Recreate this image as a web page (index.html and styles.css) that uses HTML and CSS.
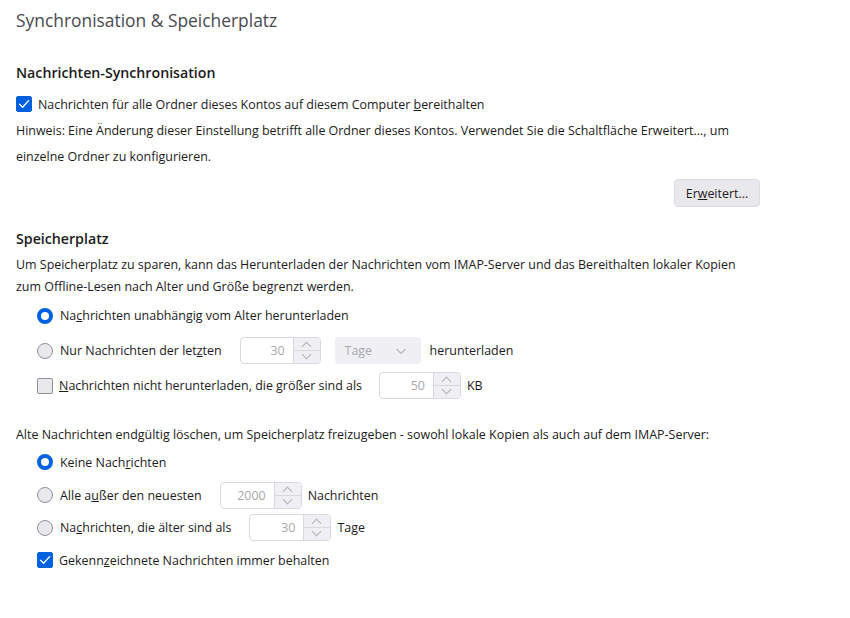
FILE: index.html
```html
<!DOCTYPE html>
<html lang="de">
<head>
<meta charset="utf-8">
<title>Synchronisation &amp; Speicherplatz</title>
<link rel="stylesheet" href="styles.css">
</head>
<body>
<div class="page">
  <h1 class="title">Synchronisation &amp; Speicherplatz</h1>

  <h2 class="heading first">Nachrichten-Synchronisation</h2>
  <div class="row check-row">
    <span class="checkbox checked"><svg viewBox="0 0 16 16" width="16" height="16"><path d="M3.6 8.3 L6.6 11.3 L12.6 4.6" fill="none" stroke="#fff" stroke-width="1.3" stroke-linecap="round" stroke-linejoin="round"/></svg></span>
    <span class="label">Nachrichten für alle Ordner dieses Kontos auf diesem Computer <u>b</u>ereithalten</span>
  </div>
  <p class="hint">Hinweis: Eine Änderung dieser Einstellung betrifft alle Ordner dieses Kontos. Verwendet Sie die Schaltfläche Erweitert..., um einzelne Ordner zu konfigurieren.</p>
  <div class="button-row">
    <button class="btn" type="button">Er<u>w</u>eitert...</button>
  </div>

  <h2 class="heading second">Speicherplatz</h2>
  <p class="desc">Um Speicherplatz zu sparen, kann das Herunterladen der Nachrichten vom IMAP-Server und das Bereithalten lokaler Kopien zum Offline-Lesen nach Alter und Größe begrenzt werden.</p>
  <div class="options">
    <div class="row opt tall">
      <span class="radio selected"></span>
      <span class="label">Na<u>c</u>hrichten unabhängig vom Alter herunterladen</span>
    </div>
    <div class="row opt tall">
      <span class="radio"></span>
      <span class="label">Nur Nachrichten der let<u>z</u>ten</span>
      <span class="number w80"><span class="value">30</span><span class="spin"><span class="up"></span><span class="down"></span></span></span>
      <span class="select"><span class="sel-text">Tage</span><svg class="chev" viewBox="0 0 12 12" width="12" height="12"><path d="M1.5 4 L6 8.5 L10.5 4" fill="none" stroke="#b5b5bb" stroke-width="1.1"/></svg></span>
      <span class="label after">herunterladen</span>
    </div>
    <div class="row opt tall">
      <span class="checkbox"></span>
      <span class="label"><u>N</u>achrichten nicht herunterladen, die größer sind als</span>
      <span class="number w82 gap16"><span class="value">50</span><span class="spin"><span class="up"></span><span class="down"></span></span></span>
      <span class="label after6">KB</span>
    </div>
  </div>

  <p class="delete-intro">Alte Nachrichten endgültig löschen, um Speicherplatz freizugeben - sowohl lokale Kopien als auch auf dem IMAP-Server:</p>
  <div class="options">
    <div class="row opt short">
      <span class="radio selected"></span>
      <span class="label">Keine Nach<u>r</u>ichten</span>
    </div>
    <div class="row opt short">
      <span class="radio"></span>
      <span class="label">Alle a<u>u</u>ßer den neuesten</span>
      <span class="number w82"><span class="value">2000</span><span class="spin"><span class="up"></span><span class="down"></span></span></span>
      <span class="label after6">Nachrichten</span>
    </div>
    <div class="row opt short">
      <span class="radio"></span>
      <span class="label">Na<u>c</u>hrichten, die älter sind als</span>
      <span class="number w82"><span class="value">30</span><span class="spin"><span class="up"></span><span class="down"></span></span></span>
      <span class="label after6">Tage</span>
    </div>
    <div class="row opt short">
      <span class="checkbox checked"><svg viewBox="0 0 16 16" width="16" height="16"><path d="M3.6 8.3 L6.6 11.3 L12.6 4.6" fill="none" stroke="#fff" stroke-width="1.3" stroke-linecap="round" stroke-linejoin="round"/></svg></span>
      <span class="label">Gekenn<u>z</u>eichnete Nachrichten immer behalten</span>
    </div>
  </div>
</div>
</body>
</html>
```
FILE: styles.css
```css
html, body {
  margin: 0;
  padding: 0;
  background: #ffffff;
}

body {
  font-family: "Open Sans", "Noto Sans", "Liberation Sans", sans-serif;
  font-size: 12.45px;
  color: #1c1b22;
}

.page {
  width: 744px;
  padding: 0 16px;
}

.title {
  margin: 0;
  height: 40px;
  line-height: 40px;
  font-size: 17.4px;
  font-weight: 400;
  color: #4a4a50;
}

.heading {
  margin: 0;
  height: 26px;
  line-height: 26px;
  font-size: 14.2px;
  font-weight: 600;
}

.heading.first { margin-top: 20px; }
.heading.second { margin-top: 19px; }

.row {
  display: flex;
  align-items: center;
}

.check-row {
  height: 26px;
  margin-top: 5px;
}

.hint {
  margin: 1px 0 0;
  line-height: 26px;
}

.button-row {
  display: flex;
  justify-content: flex-end;
  margin-top: 9px;
}

.btn {
  height: 28px;
  width: 86px;
  padding: 0;
  font: inherit;
  color: #1c1b22;
  background: #e9e9ed;
  border: 1px solid #dcdce0;
  border-radius: 4px;
}

.desc {
  margin: 2px 0 0;
  line-height: 22px;
}

.options {
  padding-left: 21px;
}

.opt.tall { height: 35px; }
.opt.short { height: 32.7px; }

.label { white-space: nowrap; }

.checkbox {
  box-sizing: border-box;
  width: 16px;
  height: 16px;
  margin-right: 6px;
  border: 1px solid #8f8f9d;
  border-radius: 2px;
  background: #e9e9ed;
  flex: none;
  display: flex;
}

.checkbox.checked {
  background: #0061e0;
  border-color: #0061e0;
}

.checkbox.checked svg {
  margin: -1px;
}

.radio {
  box-sizing: border-box;
  width: 16px;
  height: 16px;
  margin-right: 7px;
  border: 1px solid #8f8f9d;
  border-radius: 50%;
  background: #e9e9ed;
  flex: none;
}

.radio.selected {
  border: 4px solid #0061e0;
  background: #ffffff;
}

.number {
  box-sizing: border-box;
  display: flex;
  height: 27px;
  margin-left: 18px;
  border: 1px solid #d9d9dd;
  border-radius: 4px;
  background: #ffffff;
  color: #a8a8ad;
}

.number.w80 { width: 81px; }
.number.w82 { width: 82px; }
.number.gap16 { margin-left: 17px; }

.number .value {
  flex: 1;
  text-align: right;
  padding-right: 8px;
  line-height: 25px;
}

.spin {
  width: 26px;
  display: flex;
  flex-direction: column;
  border-left: 1px solid #d9d9dd;
  background: #f0f0f4;
  border-radius: 0 3px 3px 0;
}

.spin .up,
.spin .down {
  flex: 1;
  position: relative;
}

.spin .up { border-bottom: 1px solid #d9d9dd; }

.spin .up::after,
.spin .down::after {
  content: "";
  position: absolute;
  left: 9px;
  width: 6px;
  height: 6px;
  border-left: 1px solid #b0b0b6;
  border-top: 1px solid #b0b0b6;
}

.spin .up::after {
  top: 5px;
  transform: rotate(45deg);
}

.spin .down::after {
  top: 0px;
  transform: rotate(-135deg);
}

.select {
  box-sizing: border-box;
  display: flex;
  align-items: center;
  justify-content: space-between;
  width: 86px;
  height: 27px;
  margin-left: 14px;
  padding: 0 14px 0 10px;
  background: #f0f0f4;
  border-radius: 4px;
  color: #a8a8ad;
}

.after { margin-left: 9px; }
.after6 { margin-left: 6px; }

.delete-intro {
  margin: 21px 0 0;
  height: 22px;
  line-height: 22px;
}
```
